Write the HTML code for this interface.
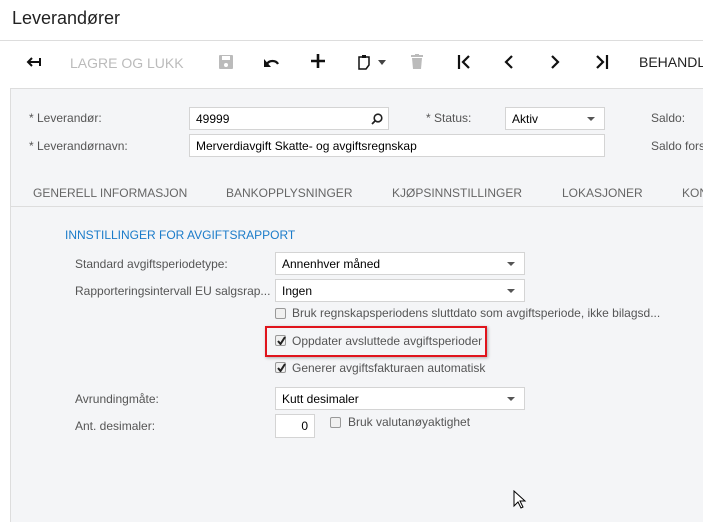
<!DOCTYPE html>
<html><head><meta charset="utf-8"><style>
*{box-sizing:border-box;margin:0;padding:0}
html,body{width:703px;height:522px;overflow:hidden}
body{background:#fff;font-family:"Liberation Sans",sans-serif;position:relative;color:#333}
#w{position:absolute;left:0;top:0;width:703px;height:522px;overflow:hidden}
.a{position:absolute;white-space:nowrap}
.lbl{font-size:12px;color:#555}
.inp{position:absolute;background:#fff;border:1px solid #d4d4d4;font-size:12px;color:#000;padding:4px 6px;height:23px}
.dd::after{content:"";position:absolute;right:9px;top:9px;border:4px solid transparent;border-top:4px solid #555;border-bottom:0}
.cb{position:absolute;width:11px;height:11px;border:1px solid #999;border-radius:2px;background:#f0f0f0}
.tab{font-size:12px;color:#666;top:186px}
svg{position:absolute}
</style></head><body><div id="w">
<div class="a" style="left:12px;top:8px;font-size:18px;color:#222">Leverandører</div>
<div class="a" style="left:0;top:40px;width:703px;height:1px;background:#ddd"></div>
<svg style="left:26px;top:55px" width="16" height="14" viewBox="0 0 16 14"><path d="M2 7h12M6 3L2 7l4 4M14 3v8" stroke="#111" stroke-width="2" fill="none"/></svg>
<div class="a" style="left:70px;top:55px;font-size:14px;color:#bbb">LAGRE OG LUKK</div>
<svg style="left:219px;top:55px" width="14" height="14"><rect x="0" y="0" width="14" height="14" rx="1" fill="#bbb"/><rect x="3" y="1" width="8" height="4" fill="#fff"/><circle cx="7" cy="10" r="2" fill="#fff"/></svg>
<svg style="left:264px;top:56px" width="16" height="12"><path d="M3 8 A6 5 0 0 1 14 8" stroke="#111" stroke-width="2.2" fill="none"/><path d="M0 3l0 8l7 0z" fill="#111"/></svg>
<svg style="left:311px;top:54px" width="14" height="14"><path d="M7 0v14M0 7h14" stroke="#111" stroke-width="2.6"/></svg>
<svg style="left:358px;top:54px" width="14" height="16"><path d="M1 3h10v8l-3 4H1z" stroke="#111" stroke-width="1.5" fill="none"/><rect x="4" y="1" width="4" height="3" fill="#111"/></svg>
<svg style="left:378px;top:60px" width="8" height="5"><path d="M0 0h8L4 5z" fill="#444"/></svg>
<svg style="left:411px;top:54px" width="12" height="15"><rect x="0" y="1" width="12" height="2" fill="#bbb"/><rect x="4" y="0" width="4" height="2" fill="#bbb"/><path d="M1 4h10l-1 11H2z" fill="#bbb"/></svg>
<svg style="left:457px;top:55px" width="14" height="14"><path d="M2 0v14" stroke="#111" stroke-width="2.2"/><path d="M12 1L6 7l6 6" stroke="#111" stroke-width="2.2" fill="none"/></svg>
<svg style="left:504px;top:55px" width="10" height="14"><path d="M8 1L2 7l6 6" stroke="#111" stroke-width="2.2" fill="none"/></svg>
<svg style="left:550px;top:55px" width="10" height="14"><path d="M2 1l6 6-6 6" stroke="#111" stroke-width="2.2" fill="none"/></svg>
<svg style="left:595px;top:55px" width="14" height="14"><path d="M2 1l6 6-6 6" stroke="#111" stroke-width="2.2" fill="none"/><path d="M12 0v14" stroke="#111" stroke-width="2.2"/></svg>
<div class="a" style="left:639px;top:54px;font-size:14px;color:#222">BEHANDLE</div>
<div class="a" style="left:10px;top:88px;width:693px;height:434px;background:#f4f5f7;border-left:1px solid #ddd;border-top:1px solid #ddd"></div>
<div class="a lbl" style="left:29px;top:111px">* Leverandør:</div>
<div class="inp" style="left:189px;top:107px;width:200px">49999</div>
<svg style="left:371px;top:113px" width="12" height="12"><circle cx="7" cy="5" r="3.8" stroke="#222" stroke-width="1.6" fill="none"/><path d="M4.5 7.5L1 11" stroke="#222" stroke-width="1.8"/></svg>
<div class="a lbl" style="left:426px;top:111px">* Status:</div>
<div class="inp dd" style="left:505px;top:107px;width:100px">Aktiv</div>
<div class="a lbl" style="left:651px;top:111px">Saldo:</div>
<div class="a lbl" style="left:29px;top:139px">* Leverandørnavn:</div>
<div class="inp" style="left:189px;top:134px;width:416px">Merverdiavgift Skatte- og avgiftsregnskap</div>
<div class="a lbl" style="left:651px;top:139px">Saldo fors</div>
<div class="a tab" style="left:33px">GENERELL INFORMASJON</div>
<div class="a tab" style="left:226px">BANKOPPLYSNINGER</div>
<div class="a tab" style="left:392px">KJØPSINNSTILLINGER</div>
<div class="a tab" style="left:562px">LOKASJONER</div>
<div class="a tab" style="left:682px">KON</div>
<div class="a" style="left:10px;top:206px;width:693px;height:1px;background:#ddd"></div>
<div class="a" style="left:65px;top:228px;font-size:12px;color:#1a7bc9">INNSTILLINGER FOR AVGIFTSRAPPORT</div>
<div class="a lbl" style="left:75px;top:257px">Standard avgiftsperiodetype:</div>
<div class="inp dd" style="left:275px;top:252px;width:250px">Annenhver måned</div>
<div class="a lbl" style="left:75px;top:284px">Rapporteringsintervall EU salgsrap...</div>
<div class="inp dd" style="left:275px;top:279px;width:250px">Ingen</div>
<div class="cb" style="left:275px;top:308px"></div>
<div class="a lbl" style="left:292px;top:306px">Bruk regnskapsperiodens sluttdato som avgiftsperiode, ikke bilagsd...</div>
<div class="a" style="left:265px;top:326px;width:222px;height:31px;border:2px solid #e0141c;box-shadow:1px 1px 3px rgba(0,0,0,.3)"></div>
<div class="cb" style="left:275px;top:335px"><svg style="left:1px;top:0" width="9" height="9"><path d="M1 5l2.5 3L8 1" stroke="#222" stroke-width="2" fill="none"/></svg></div>
<div class="a lbl" style="left:292px;top:334px">Oppdater avsluttede avgiftsperioder</div>
<div class="cb" style="left:275px;top:362px"><svg style="left:1px;top:0" width="9" height="9"><path d="M1 5l2.5 3L8 1" stroke="#222" stroke-width="2" fill="none"/></svg></div>
<div class="a lbl" style="left:292px;top:361px">Generer avgiftsfakturaen automatisk</div>
<div class="a lbl" style="left:75px;top:392px">Avrundingmåte:</div>
<div class="inp dd" style="left:275px;top:387px;width:250px">Kutt desimaler</div>
<div class="a lbl" style="left:75px;top:419px">Ant. desimaler:</div>
<div class="inp" style="left:275px;top:414px;width:40px;height:24px;text-align:right">0</div>
<div class="cb" style="left:330px;top:417px"></div>
<div class="a lbl" style="left:348px;top:415px">Bruk valutanøyaktighet</div>
<svg style="left:513px;top:490px" width="14" height="20"><path d="M1 1v15l4-4 3 6 2-1-3-6h5z" fill="#fff" stroke="#000" stroke-width="1"/></svg>
</div></body></html>
